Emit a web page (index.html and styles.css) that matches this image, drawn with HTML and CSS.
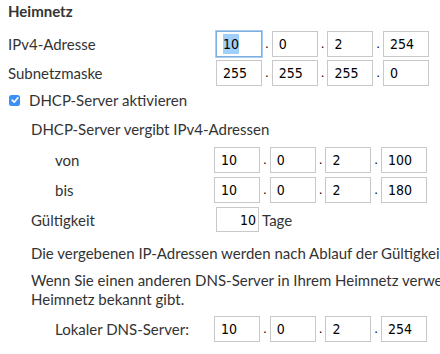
FILE: index.html
```html
<!DOCTYPE html>
<html lang="de">
<head>
  <meta charset="UTF-8">
  <title>Heimnetz</title>
  <link rel="stylesheet" href="styles.css">
</head>
<body>
  <div class="panel">
    <h2 class="title">Heimnetz</h2>

    <div class="row top">
      <span class="lbl">IPv4-Adresse</span>
      <div class="ip">
        <span class="field focused"><span class="sel">10</span></span><span class="sep">.</span>
        <span class="field">0</span><span class="sep">.</span>
        <span class="field">2</span><span class="sep">.</span>
        <span class="field">254</span>
      </div>
    </div>
    <div class="row top">
      <span class="lbl">Subnetzmaske</span>
      <div class="ip">
        <span class="field">255</span><span class="sep">.</span>
        <span class="field">255</span><span class="sep">.</span>
        <span class="field">255</span><span class="sep">.</span>
        <span class="field">0</span>
      </div>
    </div>

    <label class="check">
      <span class="box">
        <svg width="10" height="10" viewBox="0 0 10 10"><path d="M2.2 5.2 L4.2 7.2 L7.9 2.8" fill="none" stroke="#fff" stroke-width="1.7" stroke-linecap="round" stroke-linejoin="round"/></svg>
      </span>
      DHCP-Server aktivieren
    </label>

    <div class="dhcp">
      <p class="line">DHCP-Server vergibt IPv4-Adressen</p>
      <div class="row sub">
        <span class="lbl">von</span>
        <div class="ip">
          <span class="field">10</span><span class="sep">.</span>
          <span class="field">0</span><span class="sep">.</span>
          <span class="field">2</span><span class="sep">.</span>
          <span class="field">100</span>
        </div>
      </div>
      <div class="row sub">
        <span class="lbl">bis</span>
        <div class="ip">
          <span class="field">10</span><span class="sep">.</span>
          <span class="field">0</span><span class="sep">.</span>
          <span class="field">2</span><span class="sep">.</span>
          <span class="field">180</span>
        </div>
      </div>
      <div class="row valid">
        <span class="lbl">Gültigkeit</span>
        <span class="field short">10</span>
        <span class="unit">Tage</span>
      </div>
      <p class="line">Die vergebenen IP-Adressen werden nach Ablauf der Gültigkeit neu vergeben.</p>
      <p class="line two">Wenn Sie einen anderen DNS-Server in Ihrem Heimnetz verwenden, tragen Sie hier ein, welchen DNS-Server<br>Heimnetz bekannt gibt.</p>
      <div class="row sub dns">
        <span class="lbl">Lokaler DNS-Server:</span>
        <div class="ip">
          <span class="field">10</span><span class="sep">.</span>
          <span class="field">0</span><span class="sep">.</span>
          <span class="field">2</span><span class="sep">.</span>
          <span class="field">254</span>
        </div>
      </div>
    </div>
  </div>
</body>
</html>
```

FILE: styles.css
```css
body {
  margin: 0;
  background: #fff;
  font-family: Lato, "Liberation Sans", sans-serif;
  font-size: 15px;
  color: #333;
  overflow: hidden;
}
.panel {
  padding: 0 0 0 8px;
  width: 900px;
}
.title {
  margin: 0;
  padding-top: 2px;
  height: 29px;
  font-size: 15px;
  font-weight: bold;
  line-height: 18px;
}
.row {
  display: flex;
  align-items: center;
  height: 26px;
}
.row.top {
  margin-bottom: 3px;
}
.row.top .lbl {
  width: 208px;
}
.ip {
  display: flex;
  align-items: center;
}
.field {
  box-sizing: border-box;
  display: inline-block;
  width: 46px;
  height: 26px;
  padding: 0 6px;
  border: 1px solid #c8c8c8;
  background: #fff;
  font-family: "DejaVu Sans Condensed", "Liberation Sans", sans-serif;
  font-size: 14px;
  line-height: 24px;
  color: #000;
}
.field.focused {
  border-color: #7eaee0;
  box-shadow: 0 0 0 1px #a9cdf2;
}
.sel {
  background: #9fcffa;
  padding: 2px 0;
}
.sep {
  width: 9.7px;
  text-align: center;
  font-family: "DejaVu Sans Condensed", sans-serif;
  font-size: 13px;
  color: #000;
  line-height: 24px;
}
.check {
  display: flex;
  align-items: center;
  height: 26px;
  margin-top: -2px;
}
.box {
  display: inline-flex;
  align-items: center;
  justify-content: center;
  width: 11px;
  height: 11px;
  margin: 0 9px 0 1px;
  border-radius: 2.5px;
  background: #3b8ff5;
}
.dhcp {
  padding-left: 23px;
}
.line {
  margin: 0;
  line-height: 20px;
  padding: 6px 0 8px;
  white-space: nowrap;
}
.row.sub {
  padding-left: 24px;
  margin-bottom: 4px;
}
.row.sub .lbl {
  width: 159px;
}
.row.valid {
  height: 25px;
  margin: 1px 0 5px;
}
.row.valid .lbl {
  width: 185px;
}
.field.short {
  width: 43px;
  height: 25px;
  text-align: right;
  padding: 0 2px;
}
.unit {
  margin-left: 3px;
}
.line.two {
  padding-top: 0;
  line-height: 19px;
  padding-bottom: 7px;
}
```
